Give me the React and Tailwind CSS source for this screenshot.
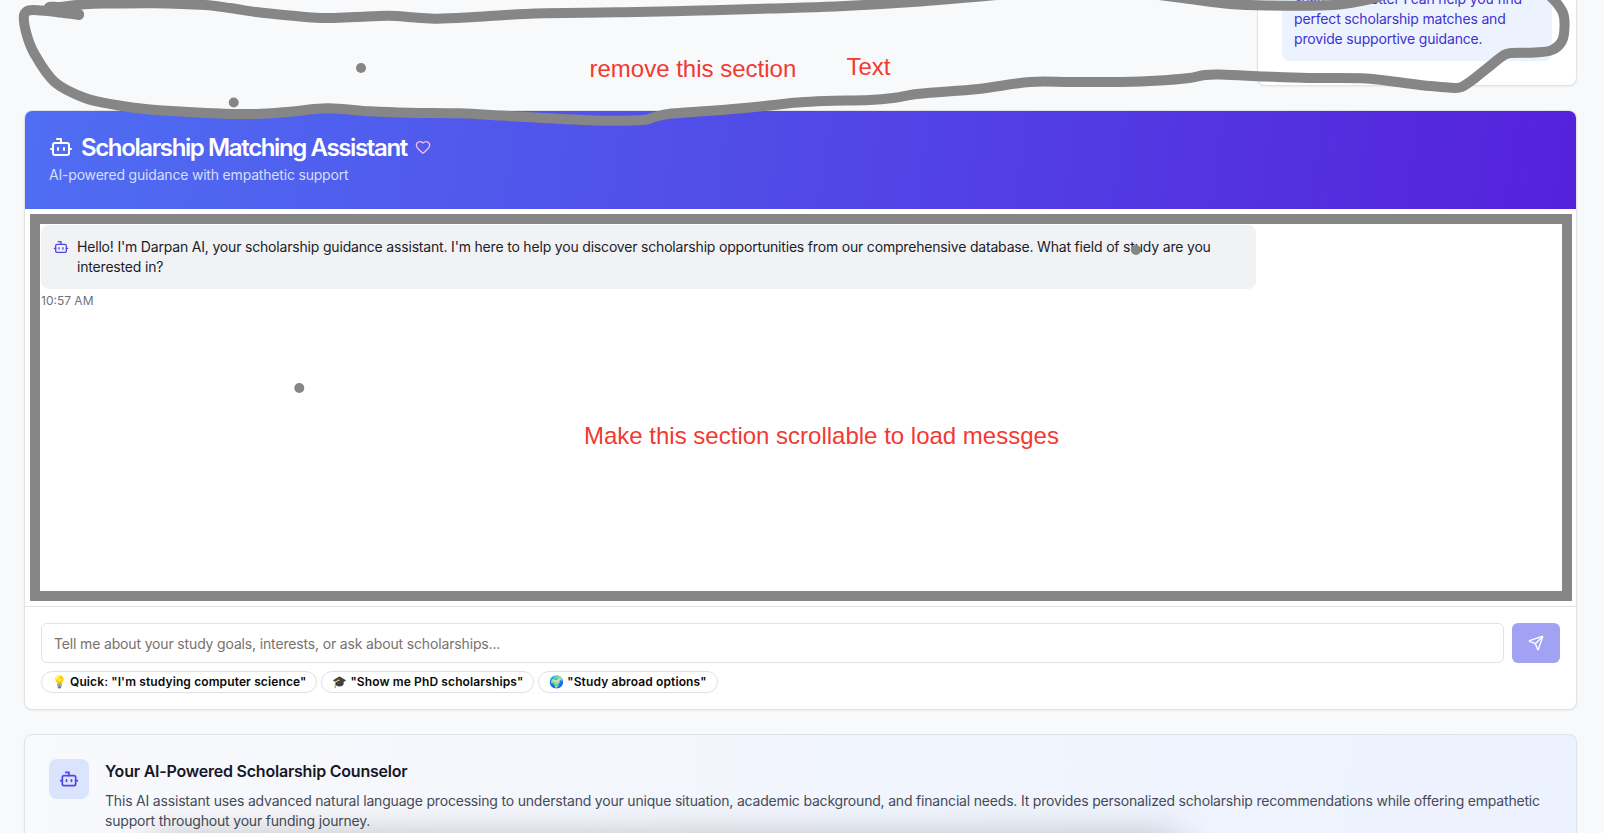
import { Bot, Heart, Send } from "lucide-react";

const MARK = "#868686";

const OUTLINE = [
  [79, 15], [60, 12.5], [41, 10.5], [29, 10.3], [24, 15], [26, 32], [34, 53], [54.6, 82], [85, 98], [116, 105],
  [150, 109.5], [187.6, 112], [220, 113.5], [256, 114], [290, 111.7], [327.5, 108.3], [370, 111.3], [409, 112.7],
  [460.6, 113.3], [500, 115.5], [535, 117.5], [596, 120.5], [646, 119.7], [656, 116.5], [671.5, 113.5], [715, 110.5],
  [760, 106.5], [798, 102.5], [825, 101], [870, 100], [893, 98], [917, 94], [978.5, 89], [1030, 82], [1070, 82],
  [1121, 82], [1160, 80.5], [1189, 78], [1205, 75], [1220, 74.5], [1265, 76.5], [1308, 78], [1366, 78.5], [1397, 82],
  [1430, 86], [1448, 87.5], [1461.5, 87], [1485, 70], [1504, 55], [1511, 53], [1535, 52.5], [1552, 50], [1562, 41],
  [1564.5, 27], [1563, 13], [1555, 1], [1544, -9],
];

const RETURN_STROKE = [
  [1390, -8], [1375, -2], [1345, 3.8], [1320, 5.6], [1270, 5.5], [1230, 4], [1190, -1], [1150, -6], [1090, -12],
  [997, -5], [920, 1.5], [835, 6.5], [770, 8.5], [700, 10.5], [620, 12.3], [535, 13.5], [505, 15], [471, 17.3],
  [437, 18.7], [415, 17.5], [389, 15.7], [355, 17], [321, 18], [290, 15.5], [256, 12], [230, 8], [205, 5],
  [153.5, 3.2], [110, 3.5], [85, 4.2], [60, 7], [49, 8.5], [62, 11.5], [79, 14],
];

function smoothPath(points) {
  let d = `M${points[0][0]} ${points[0][1]}`;
  for (let i = 0; i < points.length - 1; i++) {
    const p0 = points[i - 1] ?? points[i];
    const p1 = points[i];
    const p2 = points[i + 1];
    const p3 = points[i + 2] ?? p2;
    const len = Math.hypot(p2[0] - p1[0], p2[1] - p1[1]);
    const handle = (a, b, sign, at) => {
      const span = Math.hypot(b[0] - a[0], b[1] - a[1]) || 1;
      const k = (sign * len) / (3 * span);
      return `${at[0] + (b[0] - a[0]) * k} ${at[1] + (b[1] - a[1]) * k}`;
    };
    d += ` C${handle(p0, p2, 1, p1)} ${handle(p1, p3, -1, p2)} ${p2[0]} ${p2[1]}`;
  }
  return d;
}

function Badge({ emoji, children }) {
  return (
    <div className="inline-flex h-[22px] items-center rounded-full border border-[#e0e0e2] pr-2.5 pl-[9.500px] text-xs font-semibold tracking-[0.12px] text-[#0a0a0a]">
      <span className="mr-[2.500px] flex w-[16px] justify-center">{emoji}</span>
      <span className="whitespace-nowrap">{children}</span>
    </div>
  );
}

function TipCard() {
  return (
    <div className="flex h-[86px] w-[320px] flex-col justify-end self-end rounded-b-lg border border-t-0 border-[#e1e2e4] bg-white px-6 pb-6 shadow-xs">
      <div className="flex h-[61px] flex-col justify-end rounded-b-lg bg-[#ecf3ff] px-3 pb-3 text-sm tracking-[-0.17px] text-[#4032cf]">
        <p className="whitespace-nowrap">share, the better I can help you find</p>
        <p>perfect scholarship matches and</p>
        <p>provide supportive guidance.</p>
      </div>
    </div>
  );
}

function Assistant() {
  return (
    <section className="mt-6 flex h-[600px] flex-col overflow-hidden rounded-lg border border-[#e1e2e4] bg-white shadow-xs">
      <header className="flex h-[98px] shrink-0 flex-col gap-1.5 bg-linear-[98deg] from-[#4f6ef3] via-[#5149e7] to-[#5521db] p-6">
        <h1 className="flex items-center gap-2 text-2xl leading-none font-semibold tracking-[-1.38px] text-white">
          <Bot size={24} />
          <span className="translate-y-px">Scholarship Matching Assistant</span>
          <Heart size={16} className="text-[#f9bdf0]" />
        </h1>
        <p className="text-sm tracking-[-0.19px] text-[#d6defd]">AI-powered guidance with empathetic support</p>
      </header>
      <div className="flex-1 p-4">
        <div className="flex w-4/5 gap-2 rounded-lg bg-[#f1f2f4] p-3">
          <Bot size={16} className="mt-0.5 shrink-0 text-[#4f46e5]" />
          <p className="text-sm tracking-[-0.184px] text-[#1c1c2b]">
            Hello! I'm Darpan AI, your scholarship guidance assistant. I'm here to help you discover scholarship
            opportunities from our comprehensive database. What field of study are you interested in?
          </p>
        </div>
        <p className="mt-1 text-xs text-[#6b7080]">10:57 AM</p>
      </div>
      <footer className="flex h-[103px] shrink-0 flex-col gap-2 border-t border-[#e1e2e4] p-4">
        <div className="flex gap-2">
          <div className="flex h-10 flex-1 items-center rounded-md border border-[#e1e2e4] px-3 pt-0.5 text-sm tracking-[-0.155px] text-[#78716c]">
            Tell me about your study goals, interests, or ask about scholarships...
          </div>
          <button className="flex h-10 w-12 items-center justify-center rounded-md bg-[#a1a2f3] text-white">
            <Send size={16} />
          </button>
        </div>
        <div className="flex gap-1">
          <Badge emoji="💡">Quick: "I'm studying computer science"</Badge>
          <Badge emoji="🎓">"Show me PhD scholarships"</Badge>
          <Badge emoji="🌍">"Study abroad options"</Badge>
        </div>
      </footer>
    </section>
  );
}

function Counselor() {
  return (
    <section className="mt-6 flex h-[140px] gap-4 rounded-lg border border-[#e1e2e4] bg-linear-[98deg] from-[#f8f9fb] to-[#ecf2ff] p-6 shadow-xs">
      <div className="flex h-10 w-10 shrink-0 items-center justify-center rounded-lg bg-[#dae4fe] text-[#4f46e5]">
        <Bot size={20} />
      </div>
      <div>
        <h2 className="mb-2 text-base font-semibold tracking-[-0.22px] text-[#171728]">
          Your AI-Powered Scholarship Counselor
        </h2>
        <p className="text-sm tracking-[-0.19px] text-[#474b5a]">
          This AI assistant uses advanced natural language processing to understand your unique situation, academic
          background, and financial needs. It provides personalized scholarship recommendations while offering
          empathetic support throughout your funding journey.
        </p>
      </div>
    </section>
  );
}

function Annotations() {
  return (
    <div className="pointer-events-none absolute inset-0">
      <svg className="absolute inset-0" width="1604" height="833" fill="none">
        <g stroke={MARK} strokeWidth="10" strokeLinecap="round" strokeLinejoin="round">
          <path d={smoothPath(OUTLINE)} />
          <path d={smoothPath(RETURN_STROKE)} />
        </g>
        <g fill={MARK}>
          <circle cx="361" cy="68" r="5" />
          <circle cx="233.700" cy="102.500" r="5" />
          <circle cx="1136" cy="250" r="5" />
          <circle cx="299.300" cy="388" r="5" />
        </g>
      </svg>
      <div className="absolute top-[214px] left-[30px] h-[387px] w-[1542px] border-10 border-[#868686]" />
      <p className="absolute top-[55px] left-[589.500px] font-['Liberation_Sans',sans-serif] text-2xl leading-7 whitespace-nowrap text-[#f03a32]">
        remove this section
      </p>
      <p className="absolute top-[53px] left-[846.500px] font-['Liberation_Sans',sans-serif] text-2xl leading-7 whitespace-nowrap text-[#f03a32]">
        Text
      </p>
      <p className="absolute top-[422px] left-[584px] font-['Liberation_Sans',sans-serif] text-2xl leading-7 whitespace-nowrap text-[#f03a32]">
        Make this section scrollable to load messges
      </p>
    </div>
  );
}

export default function App() {
  return (
    <div className="relative h-[833px] w-full overflow-hidden bg-[#f8f9fb] font-[Inter,sans-serif]">
      <main className="flex flex-col pr-[27px] pl-6">
        <TipCard />
        <Assistant />
        <Counselor />
      </main>
      <div className="absolute top-[841px] left-[150px] h-20 w-[1030px] shadow-[0_0_40px_rgba(0,0,0,0.3)]" />
      <Annotations />
    </div>
  );
}
